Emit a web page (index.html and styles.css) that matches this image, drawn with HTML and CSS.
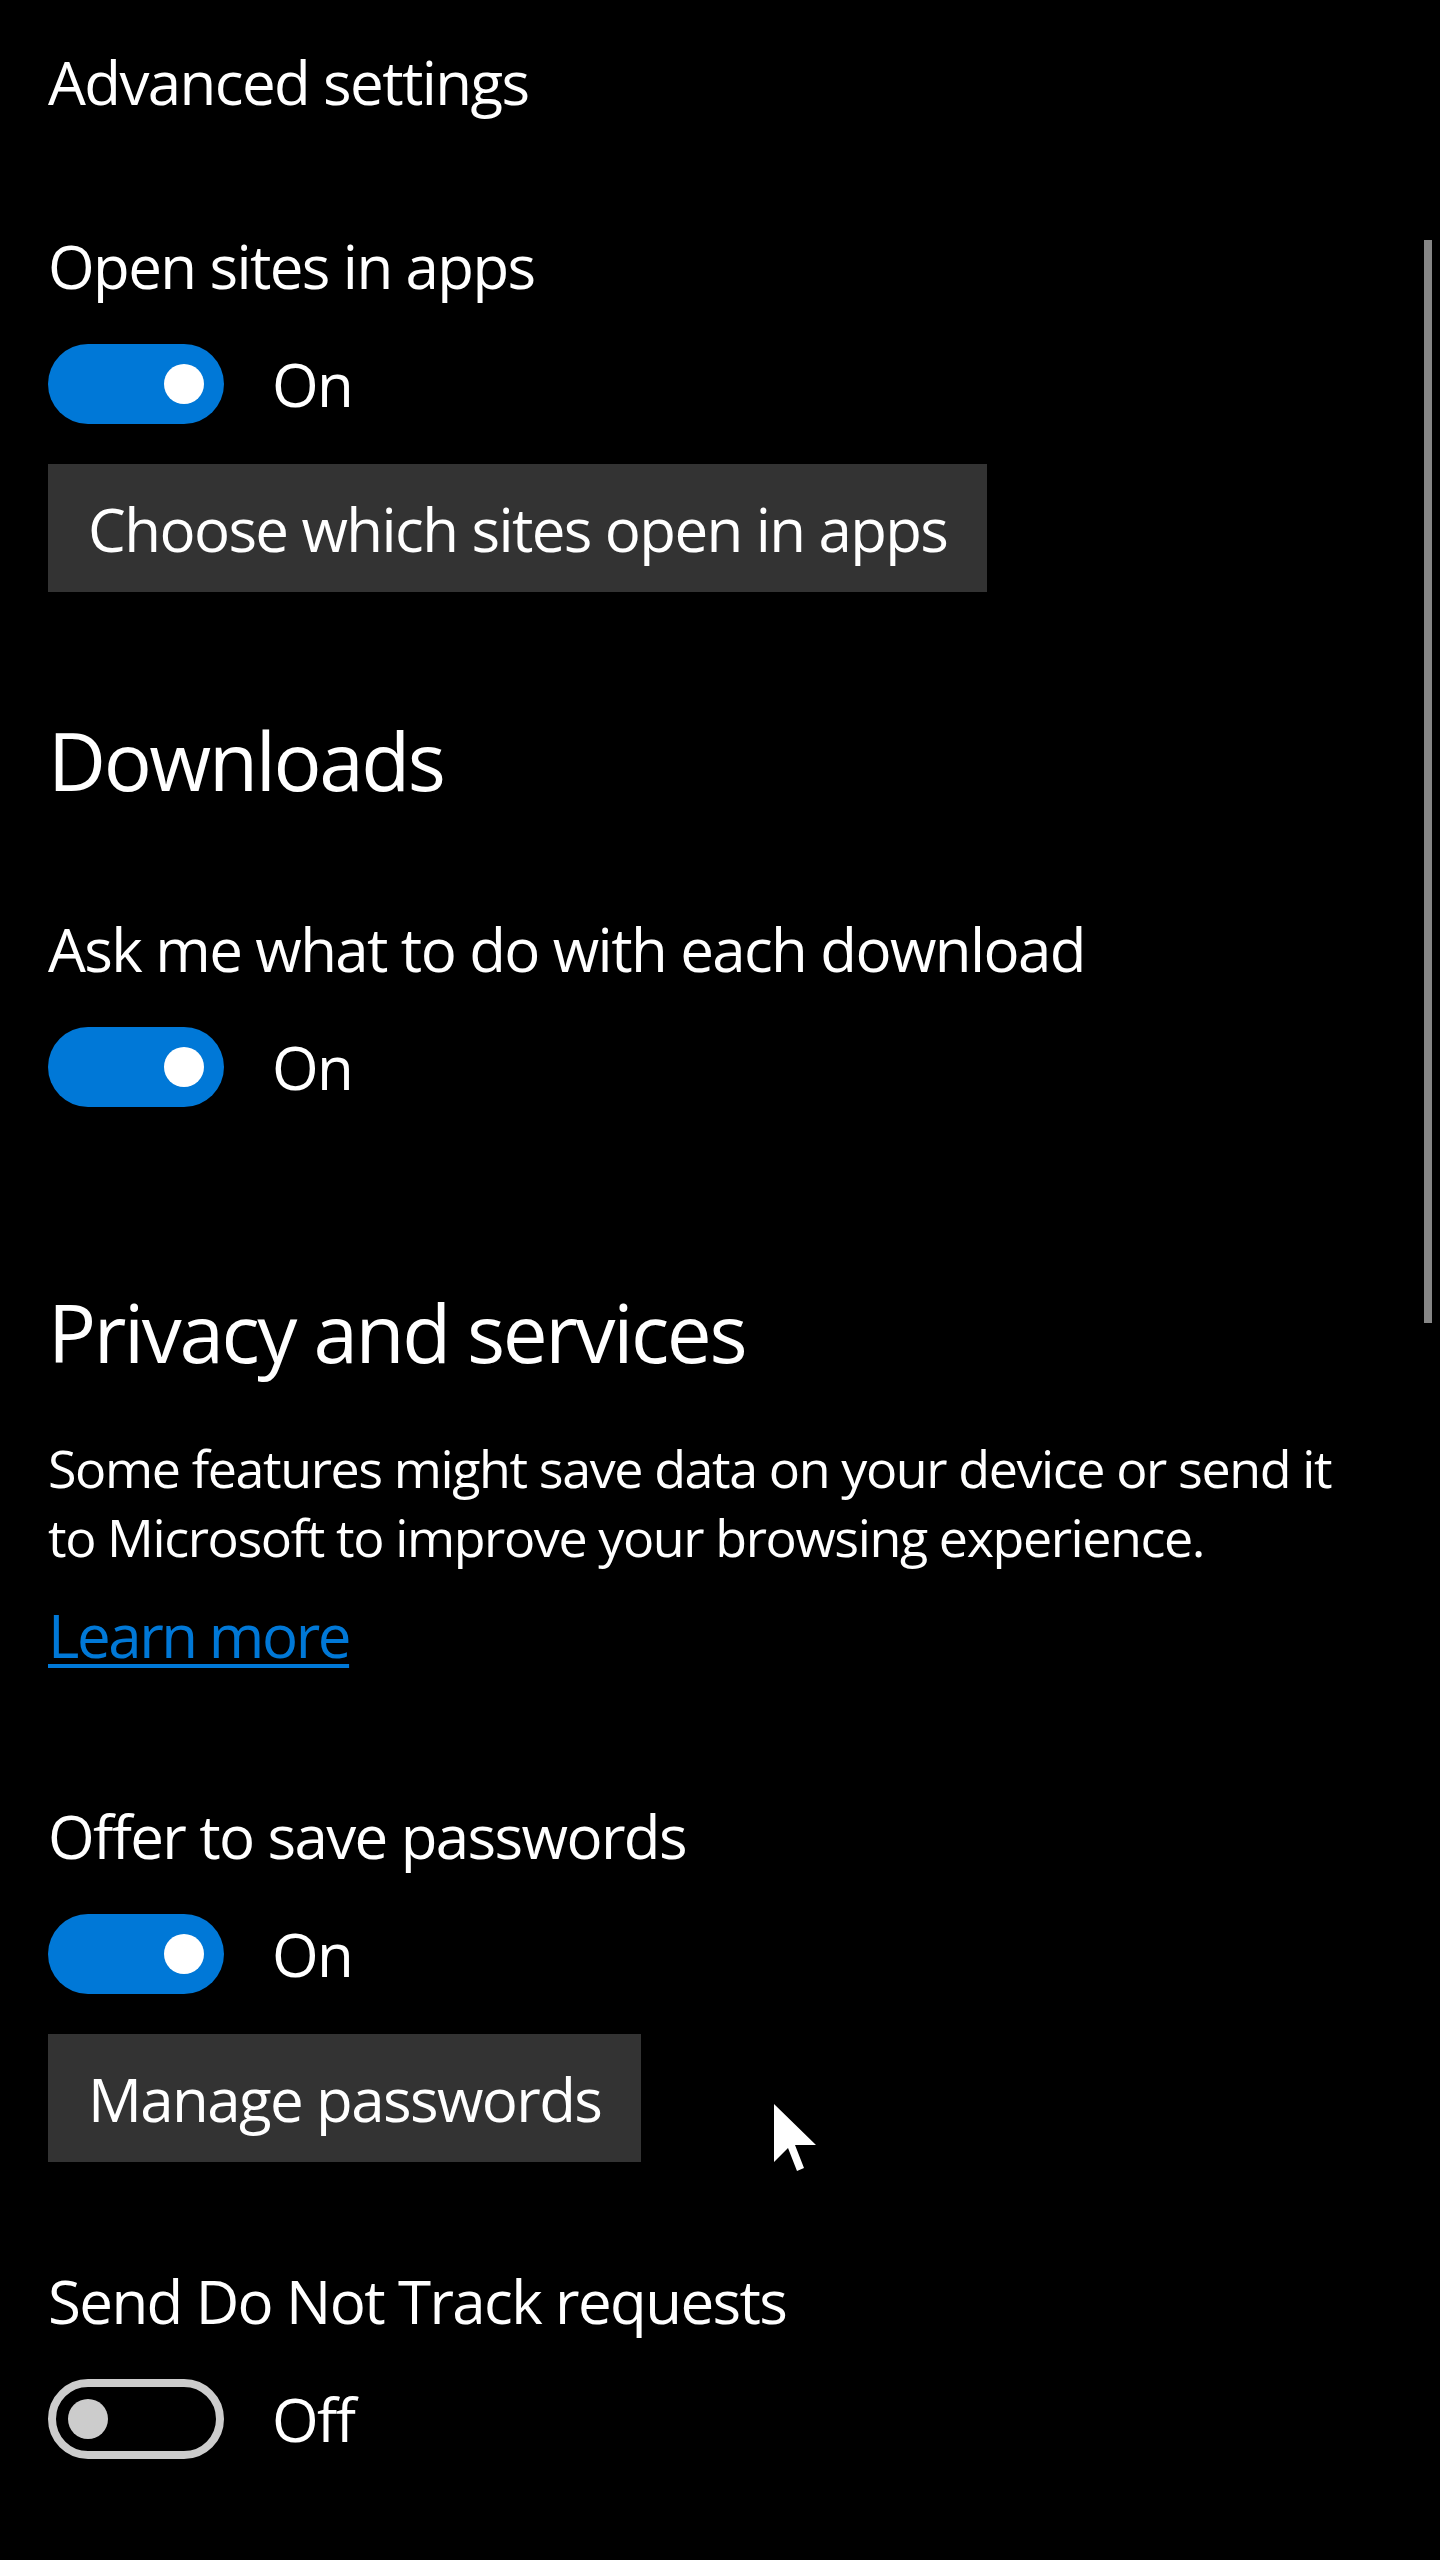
FILE: index.html
```html
<!DOCTYPE html>
<html lang="en">
<head>
<meta charset="utf-8">
<title>Advanced settings</title>
<link rel="stylesheet" href="styles.css">
</head>
<body>
<div class="page">
  <main class="panel">
    <h2 class="title">Advanced settings</h2>

    <section class="setting setting-apps">
      <div class="label">Open sites in apps</div>
      <div class="toggle-row">
        <span class="toggle on"><span class="knob"></span></span>
        <span class="state">On</span>
      </div>
      <button class="btn" type="button">Choose which sites open in apps</button>
    </section>

    <h3 class="heading heading-downloads">Downloads</h3>

    <section class="setting setting-ask">
      <div class="label">Ask me what to do with each download</div>
      <div class="toggle-row">
        <span class="toggle on"><span class="knob"></span></span>
        <span class="state">On</span>
      </div>
    </section>

    <h3 class="heading heading-privacy">Privacy and services</h3>
    <p class="desc">Some features might save data on your device or send it to Microsoft to improve your browsing experience.</p>
    <a class="link" href="#">Learn more</a>

    <section class="setting setting-passwords">
      <div class="label">Offer to save passwords</div>
      <div class="toggle-row">
        <span class="toggle on"><span class="knob"></span></span>
        <span class="state">On</span>
      </div>
      <button class="btn" type="button">Manage passwords</button>
    </section>

    <section class="setting setting-dnt">
      <div class="label">Send Do Not Track requests</div>
      <div class="toggle-row">
        <span class="toggle off"><span class="knob"></span></span>
        <span class="state">Off</span>
      </div>
    </section>
  </main>

  <div class="scroll-thumb"></div>

  <svg class="cursor" width="50" height="76" viewBox="0 0 50 76" aria-hidden="true">
    <polygon points="4,4 4,62 18,48 27,71 34,68 25,45 46,45" fill="#ffffff"/>
  </svg>
</div>
</body>
</html>
```

FILE: styles.css
```css
html, body {
  margin: 0;
  padding: 0;
  background: #000000;
}

body {
  color: #ffffff;
  font-family: "Open Sans", "Noto Sans", "Liberation Sans", sans-serif;
  font-size: 60px;
  letter-spacing: -1.6px;
}

.page {
  position: relative;
  width: 1440px;
  min-height: 2560px;
  overflow: hidden;
}

.panel {
  display: flex;
  flex-direction: column;
  align-items: flex-start;
  padding: 42px 0 0 48px;
}

.title {
  margin: 0;
  font-size: 60px;
  font-weight: 400;
  line-height: 80px;
}

.label {
  line-height: 80px;
  white-space: nowrap;
}

.setting {
  display: flex;
  flex-direction: column;
  align-items: flex-start;
}

.setting-apps { margin-top: 104px; }
.setting-ask { margin-top: 99px; }
.setting-passwords { margin-top: 121px; }
.setting-dnt { margin-top: 99px; }

.toggle-row {
  display: flex;
  align-items: center;
  height: 80px;
  margin-top: 38px;
}

.toggle {
  box-sizing: border-box;
  width: 176px;
  height: 80px;
  border-radius: 40px;
  display: flex;
  align-items: center;
}

.toggle.on {
  background: #0078d7;
  justify-content: flex-end;
  padding-right: 20px;
}

.toggle.off {
  border: 8px solid #cccccc;
  justify-content: flex-start;
  padding-left: 12px;
}

.knob {
  width: 40px;
  height: 40px;
  border-radius: 50%;
  background: #ffffff;
}

.toggle.off .knob {
  background: #cccccc;
}

.state {
  margin-left: 48px;
  line-height: 80px;
}

.btn {
  margin-top: 40px;
  padding: 25px 40px 23px 40px;
  border: none;
  border-radius: 0;
  background: #333333;
  color: #ffffff;
  font: inherit;
  font-size: 60px;
  letter-spacing: -1.6px;
  line-height: 80px;
  white-space: nowrap;
  cursor: default;
}

.heading {
  margin: 0;
  font-size: 80px;
  font-weight: 400;
  line-height: 100px;
  letter-spacing: -2.4px;
}

.heading-downloads { margin-top: 118px; }
.heading-privacy { margin-top: 175px; }

.desc {
  margin: 51px 0 0 0;
  max-width: 1320px;
  font-size: 52px;
  letter-spacing: -1.4px;
  line-height: 69px;
}

.link {
  margin-top: 24px;
  line-height: 80px;
  color: #0078d7;
  letter-spacing: -2.4px;
  text-decoration: underline;
  text-decoration-thickness: 4px;
  text-underline-offset: 6px;
}

.scroll-thumb {
  position: absolute;
  left: 1424px;
  top: 240px;
  width: 8px;
  height: 1083px;
  background: #868686;
}

.cursor {
  position: absolute;
  left: 770px;
  top: 2100px;
}
```
